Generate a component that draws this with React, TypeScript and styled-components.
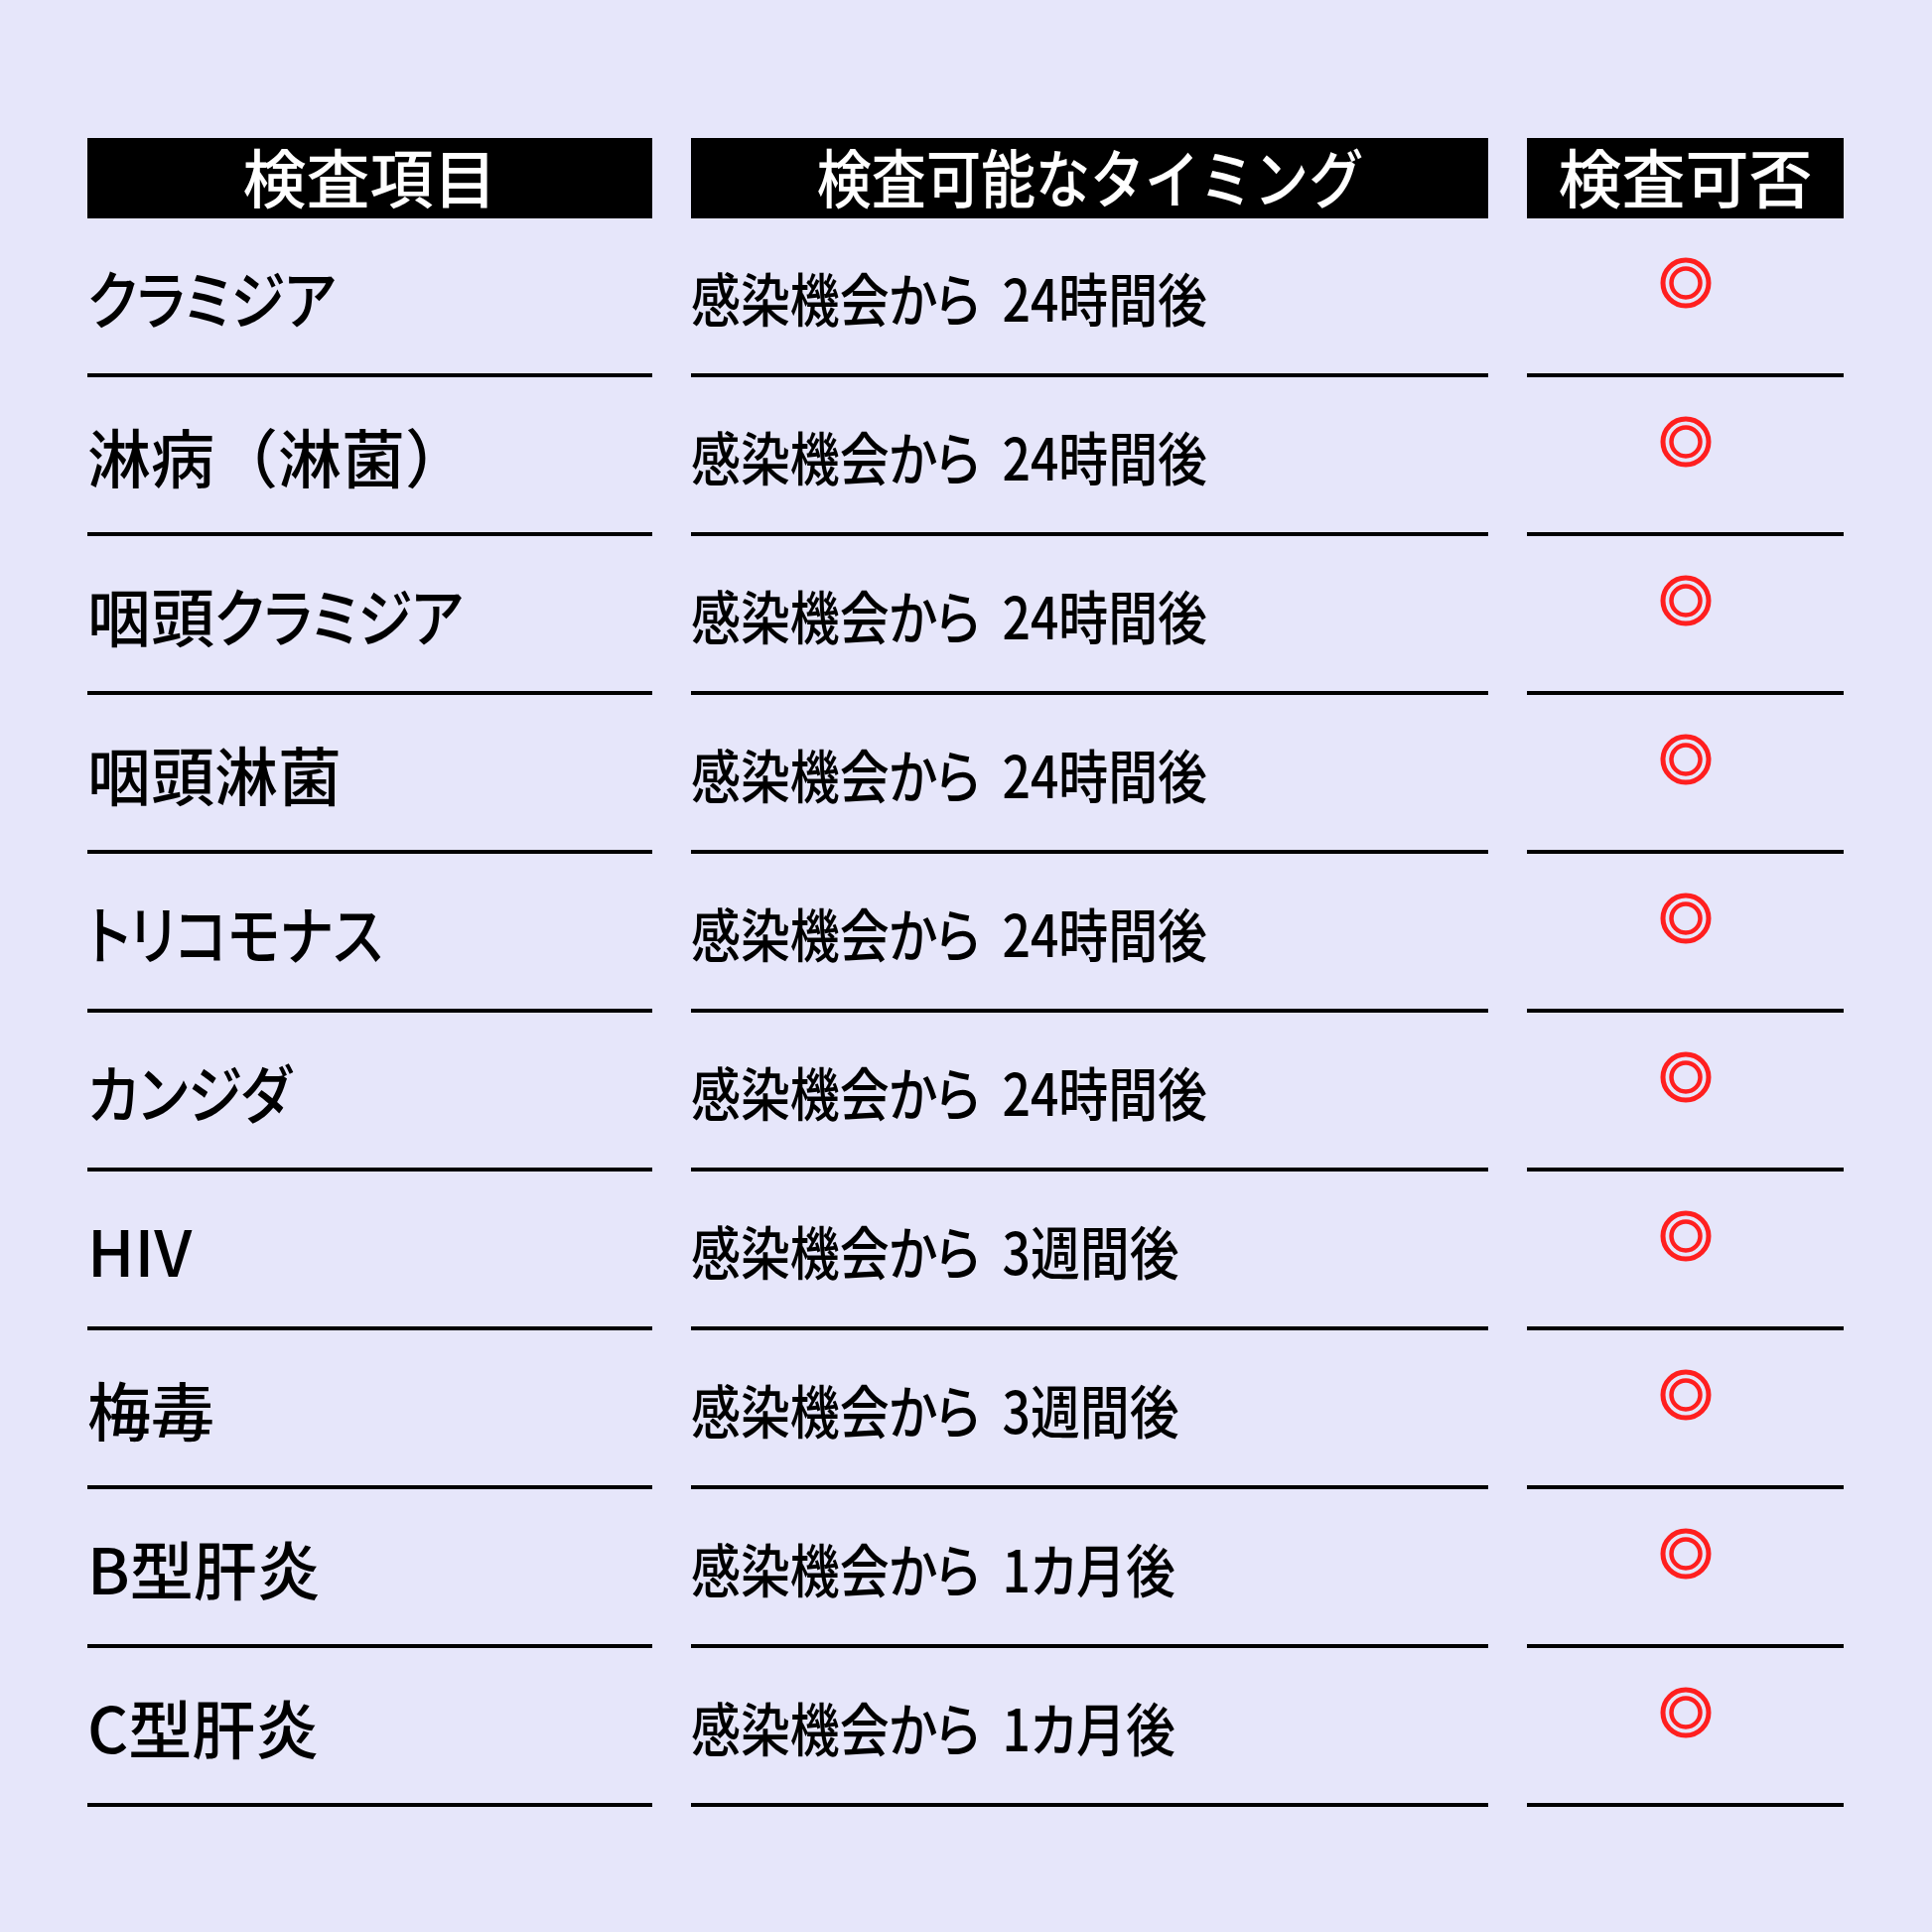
import React from 'react';
import styled, { createGlobalStyle } from 'styled-components';

const GlobalStyle = createGlobalStyle`
  html, body {
    margin: 0;
    padding: 0;
    background: #e6e6fa;
  }
  body {
    font-family: "Noto Sans CJK JP", "Noto Sans", sans-serif;
  }
`;

const Page = styled.div`
  width: 1946px;
  height: 1946px;
  box-sizing: border-box;
  padding: 139px 0 0 88px;
  background: #e6e6fa;
`;

const Table = styled.div`
  display: grid;
  grid-template-columns: 569px 803px 319px;
  grid-template-rows: 81px repeat(10, 160px);
  column-gap: 39px;
`;

const HeadCell = styled.div`
  box-sizing: border-box;
  background: #000;
  color: #fff;
  display: flex;
  align-items: center;
  justify-content: center;
  padding-bottom: 8px;
  font-size: 64px;
  font-weight: 500;
  line-height: 1;
`;

const HeadLabel = styled.span<{ $squeeze?: number }>`
  display: inline-block;
  white-space: nowrap;
  transform: scaleX(${(p) => p.$squeeze ?? 1});
`;

const Cell = styled.div`
  box-sizing: border-box;
  border-bottom: 4px solid #000;
  display: flex;
  align-items: center;
`;

const MarkCell = styled(Cell)`
  align-items: flex-start;
  justify-content: center;
  padding-top: 39px;
`;

const ItemName = styled.span`
  font-size: 64px;
  font-weight: 500;
  line-height: 1;
  color: #000;
  white-space: nowrap;
`;

// katakana runs are set proportional and a little condensed
const Kana = styled.span`
  display: inline-block;
  font-feature-settings: "palt" 1;
  transform: scaleX(0.87);
  transform-origin: left center;
`;

const Timing = styled.span`
  display: inline-block;
  font-size: 58px;
  font-weight: 500;
  line-height: 1;
  color: #000;
  white-space: pre;
  font-feature-settings: "palt" 1;
  transform: scaleX(0.86);
  transform-origin: left center;
  margin-top: 1px;
`;

const rows = [
  { name: 'クラミジア', timing: '感染機会から  24時間後' },
  { name: '淋病（淋菌）', timing: '感染機会から  24時間後' },
  { name: '咽頭クラミジア', timing: '感染機会から  24時間後' },
  { name: '咽頭淋菌', timing: '感染機会から  24時間後' },
  { name: 'トリコモナス', timing: '感染機会から  24時間後' },
  { name: 'カンジダ', timing: '感染機会から  24時間後' },
  { name: 'HIV', timing: '感染機会から  3週間後' },
  { name: '梅毒', timing: '感染機会から  3週間後' },
  { name: 'B型肝炎', timing: '感染機会から  1カ月後' },
  { name: 'C型肝炎', timing: '感染機会から  1カ月後' },
];

function renderName(name: string) {
  return name.split(/([\u30a0-\u30ff]+)/).map((part, i) =>
    /^[\u30a0-\u30ff]+$/.test(part) ? <Kana key={i}>{part}</Kana> : part
  );
}

function DoubleCircle() {
  return (
    <svg width="52" height="52" viewBox="0 0 52 52">
      <circle cx="26" cy="26" r="23" fill="none" stroke="#ff1f1f" strokeWidth="5" />
      <circle cx="26" cy="26" r="14.5" fill="none" stroke="#ff1f1f" strokeWidth="4.5" />
    </svg>
  );
}

function App() {
  return (
    <Page>
      <GlobalStyle />
      <Table>
        <HeadCell>
          <HeadLabel>検査項目</HeadLabel>
        </HeadCell>
        <HeadCell>
          <HeadLabel $squeeze={0.86}>検査可能なタイミング</HeadLabel>
        </HeadCell>
        <HeadCell>
          <HeadLabel>検査可否</HeadLabel>
        </HeadCell>
        {rows.map((row) => (
          <React.Fragment key={row.name}>
            <Cell>
              <ItemName>{renderName(row.name)}</ItemName>
            </Cell>
            <Cell>
              <Timing>{row.timing}</Timing>
            </Cell>
            <MarkCell>
              <DoubleCircle />
            </MarkCell>
          </React.Fragment>
        ))}
      </Table>
    </Page>
  );
}

export default App;
